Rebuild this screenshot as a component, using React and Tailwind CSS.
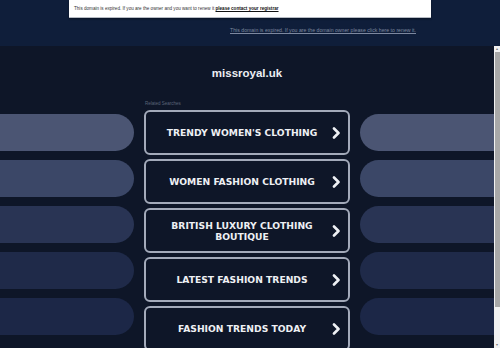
import React from 'react';

const searches = [
  'Trendy Women\'s Clothing',
  'Women Fashion Clothing',
  'British Luxury Clothing Boutique',
  'Latest Fashion Trends',
  'Fashion Trends Today',
];

const pills = ['bg-[#4b5573]', 'bg-[#3b4767]', 'bg-[#293454]', 'bg-[#1f2a49]', 'bg-[#1c2747]'];

function Chevron() {
  return (
    <svg width="9" height="12" viewBox="0 0 9 12" className="shrink-0 ml-[4px]">
      <polyline points="2,1.5 6.5,6 2,10.5" fill="none" stroke="#eef0f4" strokeWidth="2.6" strokeLinecap="round" strokeLinejoin="round" />
    </svg>
  );
}

function App() {
  return (
    <div className="w-[500px] h-[348px] overflow-hidden bg-[#0f1e3a] font-['Liberation_Sans',Arial,sans-serif]">
      {/* top notice */}
      <div className="h-[46px] relative">
        <div className="mx-auto w-[362px] h-[18px] bg-white border-b border-[#b7bcc4] shadow-[0_1px_2px_rgba(0,0,0,0.4)] flex items-end pb-[5px] pl-[5px]">
          <p className="text-[4.6px] leading-none text-[#333]">
            This domain is expired. If you are the owner and you want to renew it{' '}
            <a href="#" className="underline font-bold text-[#111]">please contact your registrar</a>
          </p>
        </div>
        <div className="flex justify-end pr-[84px] pt-[10px]">
          <a href="#" className="text-[5.2px] leading-none underline text-[#7d889f]">
            This domain is expired. If you are the domain owner please click here to renew it.
          </a>
        </div>
      </div>

      <div className="flex h-[302px]">
        <div className="w-[494px] bg-[#0e1628] flex flex-col">
          <h1 className="text-center text-[11.5px] font-bold text-[#eceef3] pt-[21px] leading-[12px]">missroyal.uk</h1>

          <div className="flex gap-[10px] mt-[19px]">
            <div className="w-[134px] flex flex-col gap-[9px] pt-[16px]">
              {pills.map((c, i) => (
                <div key={i} className={`h-[37px] rounded-r-full ${c}`} />
              ))}
            </div>

            <div className="w-[206px] flex flex-col">
              <div className="text-[4.5px] leading-[12px] text-[#5c6579] pl-[1px]">Related Searches</div>
              <div className="flex flex-col gap-[4px]">
                {searches.map((s) => (
                  <a
                    key={s}
                    href="#"
                    className="h-[45px] rounded-[6px] border-2 border-[#a3aaba] flex items-center pl-[10px] pr-[7px]"
                  >
                    <span className="flex-1 text-center uppercase font-bold text-[9.2px] leading-[11px] text-[#eef0f4] font-['DejaVu_Sans',Verdana,sans-serif] px-[8px]">
                      {s}
                    </span>
                    <Chevron />
                  </a>
                ))}
              </div>
            </div>

            <div className="w-[134px] flex flex-col gap-[9px] pt-[16px]">
              {pills.map((c, i) => (
                <div key={i} className={`h-[37px] rounded-l-full ${c}`} />
              ))}
            </div>
          </div>
        </div>

        {/* scrollbar */}
        <div className="w-[6px] bg-[#f1f1f1] flex flex-col items-center">
          <div className="h-[6px] text-[4px] leading-[6px] text-[#777]">▴</div>
          <div className="w-[5px] h-[255px] bg-[#a8a8a8]" />
          <div className="flex-1" />
          <div className="h-[6px] text-[4px] leading-[6px] text-[#777]">▾</div>
        </div>
      </div>
    </div>
  );
}

export default App;
